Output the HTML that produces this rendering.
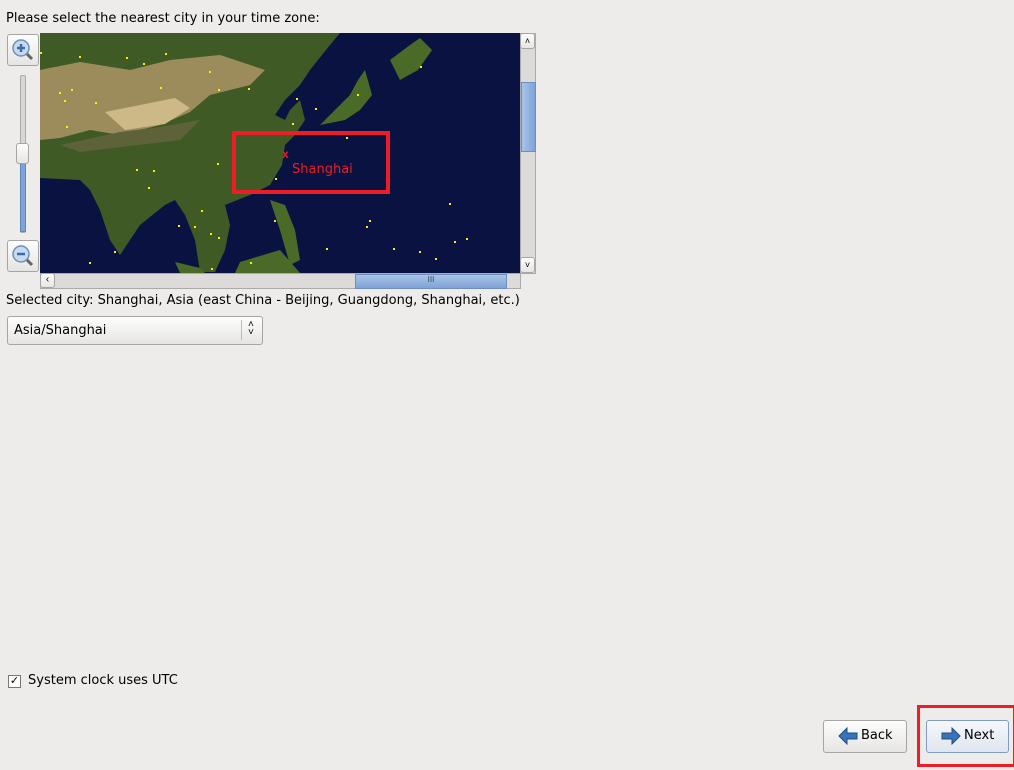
<!DOCTYPE html><html><head><style>
body{margin:0;width:1014px;height:770px;background:#edeceb;font-family:"Liberation Sans","DejaVu Sans",sans-serif;font-size:13px;color:#000;position:relative;overflow:hidden}
.a{position:absolute}
.t{font-family:'DejaVu Sans',sans-serif;font-size:13px}
.btn{position:absolute;background:linear-gradient(#fdfdfd,#e6e5e3);border:1px solid #a6a5a2;border-radius:3px}
</style></head><body>
<div class="a t" style="left:6px;top:11px">Please select the nearest city in your time zone:</div>
<div class="btn" style="left:7px;top:34px;width:30px;height:30px"></div>
<svg class="a" style="left:10px;top:37px" width="26" height="26"><circle cx="11" cy="11" r="8" fill="#c8daf0" stroke="#6d8fb8" stroke-width="1.5"/><path d="M7 11h8M11 7v8" stroke="#3a6aa8" stroke-width="2.5"/><path d="M17 17l5 5" stroke="#666" stroke-width="3"/></svg>
<div class="a" style="left:20px;top:75px;width:4px;height:156px;background:#d8d7d5;border:1px solid #aaa;border-radius:2px"></div>
<div class="a" style="left:20px;top:160px;width:4px;height:70px;background:#7ea3d6;border:1px solid #5f84b8"></div>
<div class="btn" style="left:16px;top:143px;width:11px;height:19px"></div>
<div class="btn" style="left:7px;top:240px;width:30px;height:30px"></div>
<svg class="a" style="left:10px;top:243px" width="26" height="26"><circle cx="11" cy="11" r="8" fill="#c8daf0" stroke="#6d8fb8" stroke-width="1.5"/><path d="M7 11h8" stroke="#3a6aa8" stroke-width="2.5"/><path d="M17 17l5 5" stroke="#666" stroke-width="3"/></svg>
<svg class="a" style="left:40px;top:33px" width="480" height="240" viewBox="40 33 480 240">
<rect x="40" y="33" width="480" height="240" fill="#0a1242"/>
<polygon fill="#3f5a24" points="40,33 340,33 330,45 310,70 300,85 285,100 275,115 285,120 290,110 300,100 305,120 295,135 285,145 282,165 270,185 250,195 225,205 230,225 225,250 215,272 200,272 195,240 185,215 175,200 165,205 140,225 120,255 110,240 100,210 90,190 80,180 40,178"/>
<polygon fill="#9c8c5c" points="40,70 80,62 130,70 170,60 220,55 265,70 250,85 210,95 190,112 160,125 120,135 90,130 60,138 40,140"/>
<polygon fill="#cdb888" points="105,112 140,105 175,98 190,108 165,124 125,130"/>
<polygon fill="#5e6238" points="60,145 120,132 160,127 200,120 180,140 130,146 80,152"/>
<polygon fill="#4a6b28" points="390,60 410,45 420,38 432,50 418,70 400,80"/>
<polygon fill="#4a6b28" points="335,110 350,95 358,80 365,70 372,95 360,110 345,120 320,125"/>
<polygon fill="#4a6b28" points="270,200 285,205 295,230 300,260 290,265 280,230"/>
<polygon fill="#4a6b28" points="175,262 200,268 205,273 180,273"/>
<polygon fill="#4a6b28" points="240,262 280,250 300,273 235,273"/>
<g fill="#ffee00"><rect x="79" y="56" width="2" height="2"/><rect x="126" y="57" width="2" height="2"/><rect x="143" y="63" width="2" height="2"/><rect x="165" y="53" width="2" height="2"/><rect x="209" y="71" width="2" height="2"/><rect x="218" y="89" width="2" height="2"/><rect x="248" y="88" width="2" height="2"/><rect x="160" y="87" width="2" height="2"/><rect x="95" y="102" width="2" height="2"/><rect x="296" y="98" width="2" height="2"/><rect x="315" y="108" width="2" height="2"/><rect x="357" y="94" width="2" height="2"/><rect x="292" y="123" width="2" height="2"/><rect x="295" y="131" width="2" height="2"/><rect x="346" y="137" width="2" height="2"/><rect x="420" y="66" width="2" height="2"/><rect x="388" y="13" width="2" height="2"/><rect x="217" y="163" width="2" height="2"/><rect x="246" y="190" width="2" height="2"/><rect x="136" y="169" width="2" height="2"/><rect x="153" y="170" width="2" height="2"/><rect x="148" y="187" width="2" height="2"/><rect x="201" y="210" width="2" height="2"/><rect x="178" y="225" width="2" height="2"/><rect x="194" y="226" width="2" height="2"/><rect x="210" y="233" width="2" height="2"/><rect x="218" y="237" width="2" height="2"/><rect x="114" y="251" width="2" height="2"/><rect x="89" y="262" width="2" height="2"/><rect x="449" y="203" width="2" height="2"/><rect x="369" y="220" width="2" height="2"/><rect x="366" y="226" width="2" height="2"/><rect x="454" y="241" width="2" height="2"/><rect x="466" y="238" width="2" height="2"/><rect x="326" y="248" width="2" height="2"/><rect x="393" y="248" width="2" height="2"/><rect x="419" y="251" width="2" height="2"/><rect x="435" y="258" width="2" height="2"/><rect x="274" y="220" width="2" height="2"/><rect x="250" y="262" width="2" height="2"/><rect x="211" y="268" width="2" height="2"/><rect x="275" y="178" width="2" height="2"/><rect x="40" y="52" width="2" height="2"/><rect x="59" y="92" width="2" height="2"/><rect x="71" y="89" width="2" height="2"/><rect x="66" y="126" width="2" height="2"/><rect x="64" y="100" width="2" height="2"/></g>
<rect x="234" y="133" width="154" height="59" fill="none" stroke="#ee1c24" stroke-width="4"/>
<text x="282" y="158" fill="#ee1c24" font-size="12" font-weight="bold">x</text>
<text x="292" y="173" fill="#ee1c24" font-size="13" font-family="DejaVu Sans,sans-serif">Shanghai</text>
</svg>
<div class="a" style="left:520px;top:33px;width:14px;height:239px;background:#dcdbd9;border:1px solid #aaa"></div>
<div class="a" style="left:521px;top:82px;width:13px;height:68px;background:linear-gradient(90deg,#a9c4e8,#7ea3d6);border:1px solid #6c8fc0"></div>
<div class="btn" style="left:520px;top:33px;width:13px;height:14px;font-size:9px;text-align:center;line-height:14px">˄</div>
<div class="btn" style="left:520px;top:257px;width:13px;height:14px;font-size:9px;text-align:center;line-height:14px">˅</div>
<div class="a" style="left:40px;top:273px;width:479px;height:14px;background:#dcdbd9;border:1px solid #aaa"></div>
<div class="a" style="left:355px;top:274px;width:150px;height:13px;background:linear-gradient(#a9c4e8,#7ea3d6);border:1px solid #6c8fc0;font-size:8px;text-align:center;color:#345">III</div>
<div class="btn" style="left:40px;top:273px;width:13px;height:13px;font-size:10px;text-align:center">‹</div>
<div class="a t" style="left:6px;top:293px">Selected city: Shanghai, Asia (east China - Beijing, Guangdong, Shanghai, etc.)</div>
<div class="btn" style="left:7px;top:316px;width:254px;height:27px"><span class="a t" style="left:6px;top:6px">Asia/Shanghai</span><span class="a" style="left:233px;top:3px;height:20px;border-left:1px solid #bbb"></span><span class="a" style="left:240px;top:4px;font-size:10px;line-height:8px">˄<br>˅</span></div>
<div class="a" style="left:8px;top:675px;width:11px;height:11px;border:1px solid #777;background:#fff;font-size:11px;line-height:11px;text-align:center">✓</div>
<div class="a t" style="left:28px;top:673px">System clock uses UTC</div>
<div class="btn" style="left:823px;top:720px;width:82px;height:31px"><svg class="a" style="left:14px;top:6px" width="20" height="18"><path d="M1 9L9 1v5h10v6H9v5z" fill="#3a73b8" stroke="#1f4f8a"/></svg><span class="a t" style="left:37px;top:7px">Back</span></div>
<div class="a" style="left:917px;top:705px;width:93px;height:56px;border:3px solid #ee1c24"></div>
<div class="btn" style="left:926px;top:720px;width:81px;height:31px;border-color:#7f9cc2;background:linear-gradient(#f5f8fc,#dfe6ef)"><svg class="a" style="left:14px;top:6px" width="20" height="18"><path d="M19 9L11 1v5H1v6h10v5z" fill="#3a73b8" stroke="#1f4f8a"/></svg><span class="a t" style="left:37px;top:7px">Next</span></div>
</body></html>
